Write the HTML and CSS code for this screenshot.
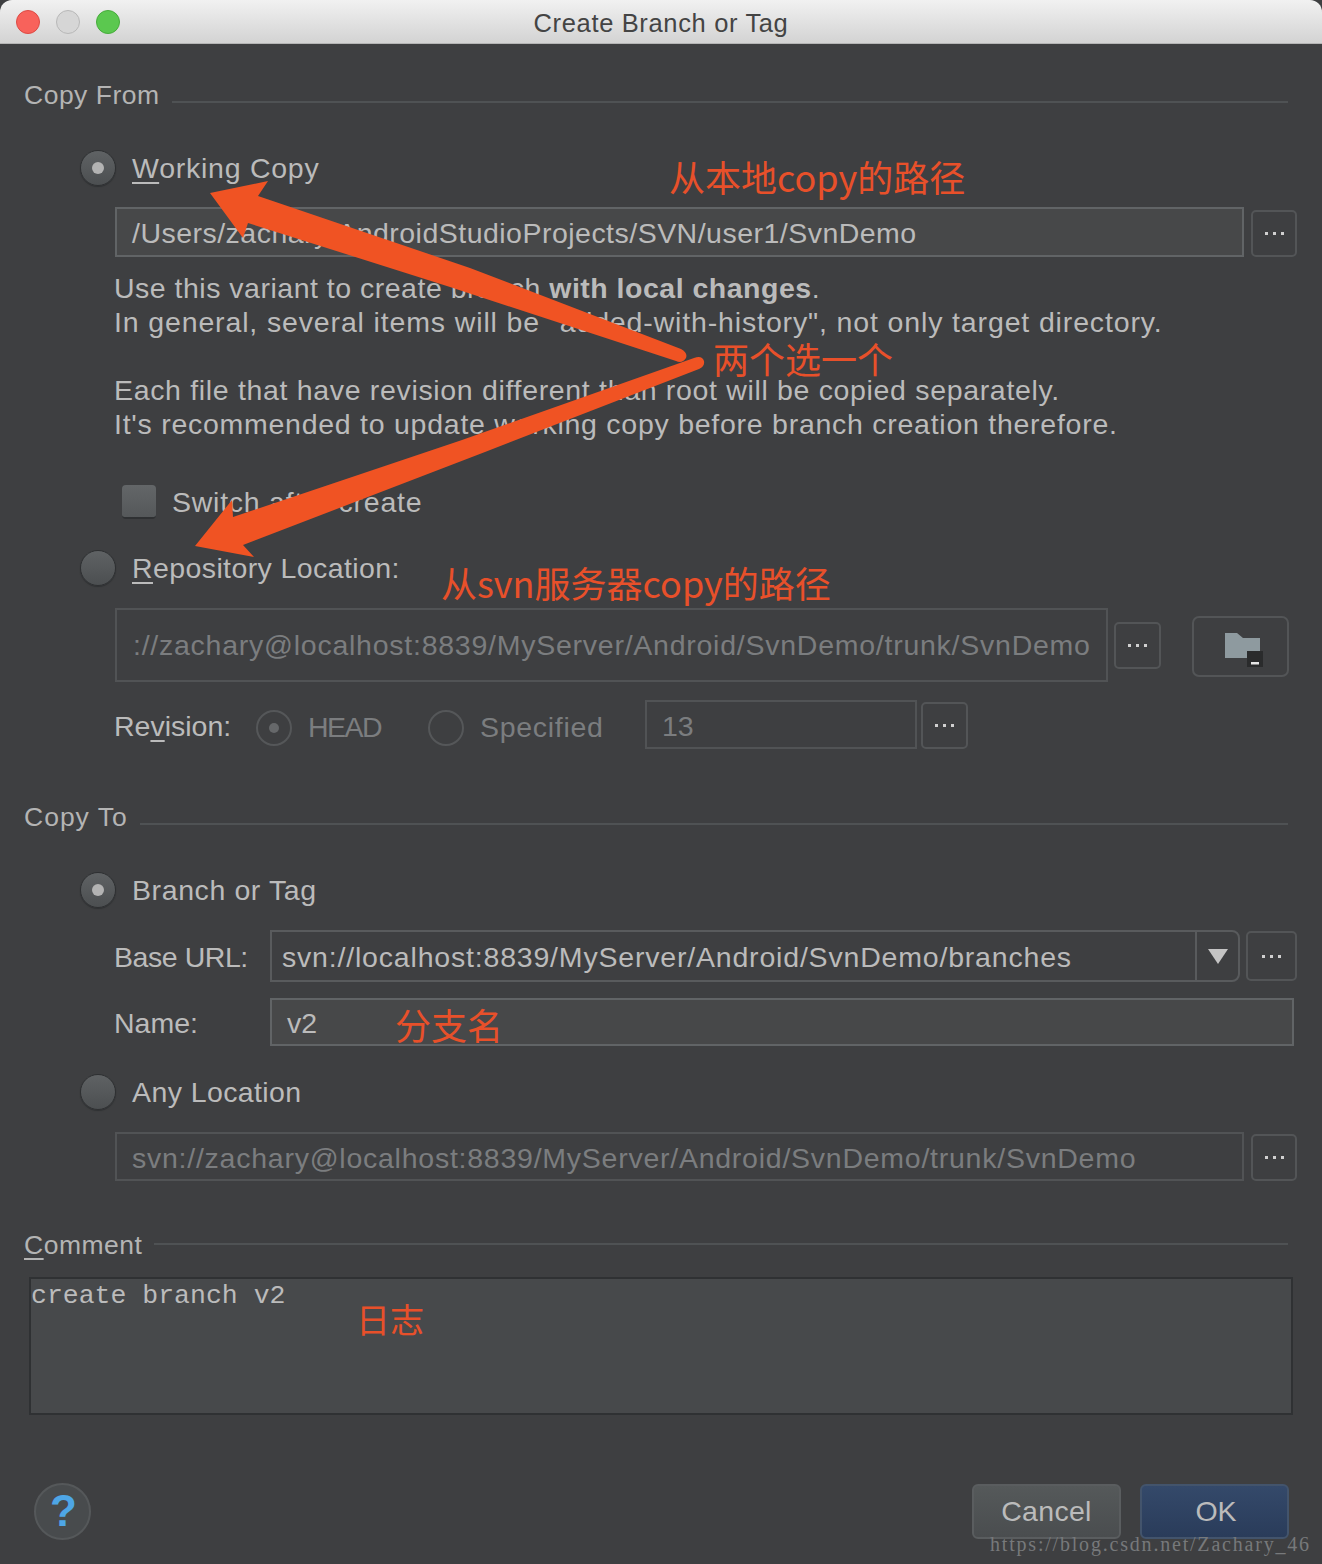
FILE: index.html
```html
<!DOCTYPE html>
<html lang="en">
<head>
<meta charset="utf-8">
<title>Create Branch or Tag</title>
<link rel="stylesheet" href="styles.css">
</head>
<body>
<div class="window">
  <header class="titlebar">
    <div class="lights"><i class="light red"></i><i class="light gray"></i><i class="light green"></i></div>
    <div class="title">Create Branch or Tag</div>
  </header>
  <main class="content">
    <div class="legend m37"><span>Copy From</span><i class="rule r-from"></i></div>
    <div class="radio-row m41"><i class="radio on"></i><span class="sp75"><u>W</u>orking Copy</span></div>
    <div class="indent m21 h50">
      <div class="field active sp48"><span>/Users/zachary/AndroidStudioProjects/SVN/user1/SvnDemo</span></div>
      <button class="more h47 low"><i class="dots"></i></button>
    </div>
    <div class="desc">
      <div class="sp50">Use this variant to create branch <b>with local changes</b>.</div>
      <div class="sp86">In general, several items will be "added-with-history", not only target directory.</div>
      <div class="blank"></div>
      <div class="sp67">Each file that have revision different than root will be copied separately.</div>
      <div class="sp74">It's recommended to update working copy before branch creation therefore.</div>
    </div>
    <div class="check-row"><i class="check"></i><span class="sp75">Switch after create</span></div>
    <div class="radio-row m31"><i class="radio"></i><span class="sp40"><u>R</u>epository Location:</span></div>
    <div class="indent repo-row m22 h74">
      <div class="field disabled repo sp75"><span>://zachary@localhost:8839/MyServer/Android/SvnDemo/trunk/SvnDemo</span></div>
      <button class="more h47 wide"><i class="dots"></i></button>
      <button class="folder">
        <svg width="40" height="36" viewBox="0 0 40 36"><path d="M2 2h12l6 5h17v20H2z" fill="#8e9a9f"/><rect x="24" y="20" width="16" height="16" fill="#2a2b2c"/><rect x="28" y="31" width="8" height="2.5" fill="#e6e6e6"/></svg>
      </button>
    </div>
    <div class="revision">
      <span class="rev-label">Re<u>v</u>ision:</span>
      <i class="radio off on-dim"></i><span class="dim head">HEAD</span>
      <i class="radio off"></i><span class="dim spec">Specified</span>
      <div class="field disabled rev-field"><span>13</span></div>
      <button class="more h47 wide low"><i class="dots"></i></button>
    </div>
    <div class="legend m54"><span class="sp100">Copy To</span><i class="rule r-to"></i></div>
    <div class="radio-row m41"><i class="radio on"></i><span class="sp60">Branch or Tag</span></div>
    <div class="form-row m22 h52">
      <span class="form-label base">Base URL:</span>
      <div class="combo"><span class="combo-text sp81">svn://localhost:8839/MyServer/Android/SvnDemo/branches</span><span class="combo-arrow"><i class="tri"></i></span></div>
      <button class="more h50"><i class="dots"></i></button>
    </div>
    <div class="form-row m16 h48">
      <span class="form-label">Name:</span>
      <div class="field active name"><span>v2</span></div>
    </div>
    <div class="radio-row m28"><i class="radio"></i><span class="sp40">Any Location</span></div>
    <div class="indent m22 h49">
      <div class="field disabled sp75"><span>svn://zachary@localhost:8839/MyServer/Android/SvnDemo/trunk/SvnDemo</span></div>
      <button class="more h47 low"><i class="dots"></i></button>
    </div>
    <div class="legend m50"><span><u>C</u>omment</span><i class="rule r-comment"></i></div>
    <div class="comment">create branch v2</div>
    <footer class="footer">
      <div class="help">?</div>
      <div class="actions">
        <button class="btn cancel">Cancel</button>
        <button class="btn ok">OK</button>
      </div>
    </footer>
  </main>

  <svg class="arrows" width="1322" height="1564" viewBox="0 0 1322 1564">
    <path d="M210 193 268 181 258 196 470 268 681 349Q688 353 686 358 682 364 676 361L450 287 248 223 243 238Z" fill="#f05323"/>
    <path d="M195 546 232 500 233 517 462 440 694 358Q702 355 704 361 705 366 699 369L485 452 243 545 254 557Z" fill="#f05323"/>
  </svg>
  <span class="note n1">从本地copy的路径</span>
  <span class="note n2">两个选一个</span>
  <span class="note n3">从svn服务器copy的路径</span>
  <span class="note n4">分支名</span>
  <span class="note n5">日志</span>
  <span class="watermark">https://blog.csdn.net/Zachary_46</span>
</div>
</body>
</html>
```
FILE: styles.css
```css
* { box-sizing: border-box; }
html, body { margin: 0; padding: 0; background: #3d3f41; }
.window {
  position: relative;
  width: 1322px;
  height: 1564px;
  overflow: hidden;
  background: #3e3f41;
  color: #bbbbbb;
  font-family: "Liberation Sans", Arial, sans-serif;
  font-size: 28.5px;
}
u { text-underline-offset: 4px; text-decoration-thickness: 2px; }
i { display: block; }

.sp40 { letter-spacing: .4px; } .sp48 { letter-spacing: .48px; } .sp50 { letter-spacing: .5px; }
.sp60 { letter-spacing: .6px; } .sp67 { letter-spacing: .67px; } .sp74 { letter-spacing: .74px; }
.sp75 { letter-spacing: .75px; } .sp81 { letter-spacing: .81px; } .sp86 { letter-spacing: .86px; }
.sp100 { letter-spacing: 1px; }

.titlebar {
  position: relative;
  height: 44px;
  display: flex;
  align-items: center;
  justify-content: center;
  padding-top: 3px;
  background: linear-gradient(#f1f1f1, #d3d3d3);
  border-radius: 12px 12px 0 0;
  border-bottom: 1px solid #b5b5b5;
}
.title { color: #444; font-size: 25.5px; letter-spacing: .65px; }
.lights { position: absolute; left: 16px; top: 10px; display: flex; gap: 16px; }
.light { width: 24px; height: 24px; border-radius: 50%; }
.red { background: #f8625b; border: 1px solid #dd4a44; }
.gray { background: #d6d6d6; border: 1px solid #b8b8b8; }
.green { background: #5bc84f; border: 1px solid #46ac3b; }

.content { padding: 0 25px 0 24px; display: flex; flex-direction: column; }

.m16 { margin-top: 16px; } .m21 { margin-top: 21px; } .m22 { margin-top: 22px; }
.m28 { margin-top: 28px; } .m31 { margin-top: 31px; } .m37 { margin-top: 37px; }
.m41 { margin-top: 41px; } .m50 { margin-top: 50px; } .m54 { margin-top: 54px; }
.h48 { height: 48px; } .h49 { height: 49px; } .h50 { height: 50px; }
.h52 { height: 52px; } .h74 { height: 74px; }

.legend { height: 28px; display: flex; align-items: center; gap: 12px; padding-right: 9px; font-size: 26.5px; letter-spacing: .5px; color: #b4b4b4; flex: none; }
.rule { flex: 1; height: 2px; background: #4f5254; }
.r-from { transform: translateY(7px); }
.r-to { transform: translateY(7px); }
.r-comment { transform: translateY(-1px); }

.radio-row { height: 36px; display: flex; align-items: center; gap: 16px; padding-left: 56px; flex: none; }
.radio {
  width: 36px; height: 36px; flex: none; border-radius: 50%;
  background: linear-gradient(#5f6264, #4c4f51);
  border: 1px solid #2e3032;
  box-shadow: 0 1px 1px #2f3133;
  position: relative;
}
.radio.on::after, .on-dim::after {
  content: ""; position: absolute; left: 11px; top: 11px; width: 12px; height: 12px;
  border-radius: 50%; background: #b3b3b3;
}
.radio.off { background: none; border: 2px solid #555759; box-shadow: none; margin-top: 6px; }
.radio.on-dim::after { left: 11px; top: 11px; width: 10px; height: 10px; background: #66686a; }

.indent { display: flex; align-items: center; gap: 7px; padding-left: 91px; flex: none; }
.repo-row { gap: 6px; padding-right: 8px; }
.field {
  flex: 1; min-width: 0; height: 100%;
  display: flex; align-items: center;
  padding: 3px 0 0 15px; white-space: nowrap; overflow: hidden;
  border: 2px solid #565859;
}
.field.active { background: #474849; border-color: #616466; color: #bbbbbb; }
.field.disabled { color: #7b7d7f; border-color: #515355; }
.field.repo { padding: 1px 0 0 16px; }

.more {
  width: 46px; flex: none; padding: 0;
  display: flex; align-items: center; justify-content: center;
  background: none; border: 2px solid #535557; border-radius: 5px;
}
.h47 { height: 47px; }
.wide { width: 47px; }
.low { align-self: flex-end; }
.more.h50 { height: 50px; width: 51px; }
.dots { width: 3px; height: 3px; background: #d0d0d0; box-shadow: -8px 0 0 #d0d0d0, 8px 0 0 #d0d0d0; }

.folder {
  width: 97px; height: 61px; flex: none; margin: 2px 0 0 25px; padding: 0;
  display: flex; align-items: center; justify-content: center;
  background: none; border: 2px solid #535557; border-radius: 7px;
}
.folder svg { margin: 6px 0 0 4px; }

.desc { margin-top: 14px; padding-left: 90px; line-height: 34px; height: 170px; flex: none; }
.desc b { font-weight: 700; }
.blank { height: 34px; }

.check-row { margin-top: 44px; height: 34px; display: flex; align-items: center; gap: 16px; padding-left: 98px; flex: none; }
.check { width: 34px; height: 34px; border-radius: 4px; background: linear-gradient(#636668, #55585a); border-bottom: 2px solid #2f3133; }

.revision { margin-top: 18px; height: 49px; display: flex; align-items: center; padding-left: 90px; flex: none; }
.rev-label { width: 142px; flex: none; padding-top: 3px; }
.dim { color: #7b7d7f; padding-top: 6px; }
.head { width: 120px; margin-left: 16px; flex: none; letter-spacing: -1.5px; }
.spec { width: 165px; margin-left: 16px; flex: none; letter-spacing: .7px; }
.rev-field { flex: none; width: 272px; height: 49px; }
.revision .more { margin-left: 4px; }

.form-row { display: flex; align-items: center; flex: none; padding-left: 90px; }
.form-label { width: 156px; flex: none; padding-top: 3px; }
.base { letter-spacing: -.45px; }
.combo {
  flex: 1; height: 100%; margin-right: 6px;
  display: flex; align-items: center;
  border: 2px solid #595b5d; border-radius: 0 8px 8px 0;
}
.combo-text { flex: 1; padding: 3px 0 0 10px; }
.combo-arrow { width: 43px; height: 100%; display: flex; align-items: center; justify-content: center; border-left: 2px solid #595b5d; }
.tri { width: 0; height: 0; border-left: 10px solid transparent; border-right: 10px solid transparent; border-top: 15px solid #c4c4c4; }
.field.name { margin-right: 3px; }

.comment {
  margin: 18px 4px 0 5px; height: 138px; flex: none; padding: 1px 0 0 0;
  background: #47494b; border: 2px solid #2f3133;
  font-family: "Liberation Mono", monospace; font-size: 26.5px; line-height: 32px;
}

.footer { margin-top: 68px; height: 56px; display: flex; justify-content: space-between; align-items: center; padding: 0 8px 0 10px; flex: none; }
.help {
  width: 57px; height: 57px; border-radius: 50%;
  display: flex; align-items: center; justify-content: center;
  padding-left: 2px;
  background: #484b4d; border: 2px solid #55585a;
  color: #4ea6e6; font-size: 44px; font-weight: 700;
}
.actions { display: flex; gap: 19px; }
.btn { width: 149px; height: 55px; padding: 0; border-radius: 6px; font: inherit; color: #bbbbbb; }
.cancel { background: linear-gradient(#55595a, #4a4d4f); border: 2px solid #5a5d5f; letter-spacing: .3px; }
.ok { background: linear-gradient(#34496a, #2a3c5a); border: 2px solid #43546c; padding-left: 3px; }

.arrows { position: absolute; left: 0; top: 0; pointer-events: none; }
.note {
  position: absolute; white-space: nowrap; color: #e8502a;
  font-family: "Noto Sans CJK SC", sans-serif; font-size: 36px; font-weight: 400; line-height: 44px;
}
.n1 { left: 669px; top: 154px; }
.n2 { left: 713px; top: 336px; }
.n3 { left: 441px; top: 560px; }
.n4 { left: 395px; top: 1002px; }
.n5 { left: 356px; top: 1297px; font-size: 34px; }
.watermark {
  position: absolute; left: 990px; top: 1533px; white-space: nowrap;
  font-family: "Liberation Serif", serif; font-size: 20px; letter-spacing: 1.8px; color: #77797b;
}
```
